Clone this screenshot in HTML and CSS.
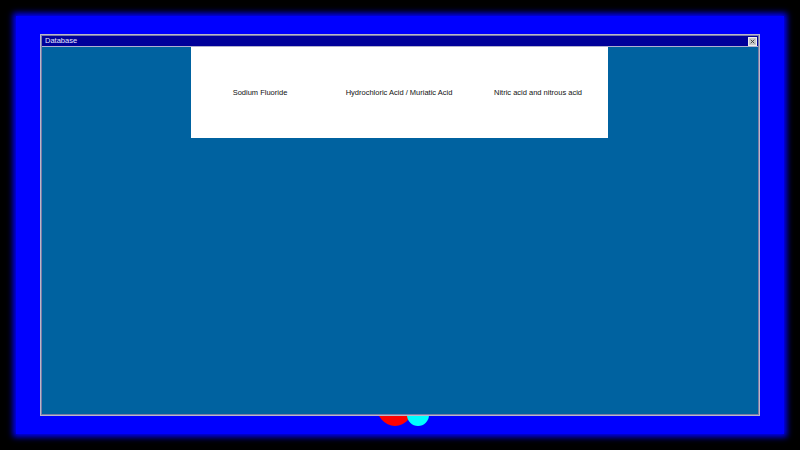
FILE: index.html
```html
<!DOCTYPE html>
<html>
<head>
<meta charset="utf-8">
<link rel="stylesheet" href="styles.css">
</head>
<body>
<div class="screen">
  <div class="desk">
    <div class="blob red"></div>
    <div class="blob cyan"></div>
    <div class="window">
      <div class="titlebar">
        <span class="title">Database</span>
        <span class="close"><svg width="7" height="7" viewBox="0 0 7 7"><path d="M1 1L6 6M6 1L1 6" stroke="#333" stroke-width="1.2"/></svg></span>
      </div>
      <div class="content">
        <div class="panel">
          <div class="cell">Sodium Fluoride</div>
          <div class="cell">Hydrochloric Acid / Muriatic Acid</div>
          <div class="cell">Nitric acid and nitrous acid</div>
        </div>
      </div>
    </div>
  </div>
</div>
</body>
</html>
```
FILE: styles.css
```css
html, body {
  margin: 0;
  padding: 0;
  background: #000;
  width: 800px;
  height: 450px;
  overflow: hidden;
  font-family: "Liberation Sans", Arial, sans-serif;
}
.screen {
  padding: 16px;
}
.desk {
  position: relative;
  width: 768px;
  height: 418px;
  background: #0000ff;
  box-shadow: 0 0 6px 3px #0000ff;
  padding: 18px 0 0 24px;
  box-sizing: border-box;
}
.window {
  position: relative;
  z-index: 2;
  width: 720px;
  height: 382px;
  box-sizing: border-box;
  border: 1px solid #b8b8c8;
  outline: 1px solid #7a7aa8;
  outline-offset: -2px;
  background: #0062a0;
  display: flex;
  flex-direction: column;
}
.titlebar {
  height: 10px;
  background: #00009a;
  border-bottom: 1px solid #b0b0d0;
  display: flex;
  align-items: center;
  justify-content: space-between;
  padding: 0 1px 0 3px;
  margin: 1px 1px 0 1px;
}
.title {
  color: #e8e8ff;
  font-size: 7.5px;
  line-height: 10px;
}
.close {
  width: 7px;
  height: 7px;
  background: #c8c8c8;
  border: 1px solid #eee;
  display: flex;
  align-items: center;
  justify-content: center;
}
.close svg { width: 5px; height: 5px; }
.content {
  flex: 1;
  display: flex;
  justify-content: center;
  padding-right: 2px;
}
.panel {
  width: 417px;
  height: 91px;
  background: #fff;
  display: grid;
  grid-template-columns: 1fr 1fr 1fr;
  align-items: center;
}
.cell {
  text-align: center;
  font-size: 7.5px;
  color: #111;
  -webkit-font-smoothing: antialiased;
}
.blob {
  position: absolute;
  border-radius: 50%;
  z-index: 1;
}
.red {
  background: #ff0000;
  left: 360px;
  top: 366px;
  width: 38px;
  height: 44px;
}
.cyan {
  background: #00ffff;
  left: 391px;
  top: 388px;
  width: 22px;
  height: 22px;
}
```
